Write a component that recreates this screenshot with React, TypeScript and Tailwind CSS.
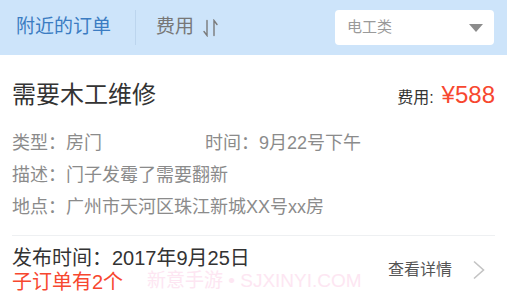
import React from 'react'

const font = "font-['Liberation_Sans','Noto_Sans_CJK_SC',sans-serif]"

function SortIcon() {
  return (
    <svg width="15" height="18" viewBox="0 0 15 18" fill="none" stroke="#7a7a7a" strokeWidth="1.4" strokeLinecap="round">
      <path d="M4 1.5V16.5L1 12.5" />
      <path d="M11 16.5V1.5L14 5.5" />
    </svg>
  )
}

function Chevron() {
  return (
    <svg width="14" height="20" viewBox="0 0 14 20" fill="none" stroke="#c3c3c3" strokeWidth="1.6">
      <path d="M2 1.5L11.5 10L2 18.5" />
    </svg>
  )
}

export default function App() {
  return (
    <div className={`relative h-[301px] w-[507px] overflow-hidden bg-white ${font}`}>
      {/* top filter bar */}
      <div className="flex h-[55px] items-center bg-[#cde4fa]">
        <div className="pl-4 text-[19px] text-[#3b7cc2]">附近的订单</div>
        <div className="ml-[24px] h-[35px] w-px bg-[#bcd5ee]" />
        <div className="ml-[20px] flex items-center gap-[9px] text-[19px] text-[#777]">
          <span>费用</span>
          <SortIcon />
        </div>
        <div className="ml-auto mr-[13px] flex h-[35px] w-[159px] items-center justify-between rounded-[4px] bg-white pl-3 pr-[11px]">
          <span className="text-[15px] text-[#9a9a9a]">电工类</span>
          <span className="h-0 w-0 border-x-[7.5px] border-t-[8px] border-x-transparent border-t-[#8c8c8c]" />
        </div>
      </div>

      {/* order card */}
      <div className="px-3">
        <div className="flex items-center justify-between pt-[22px]">
          <div className="text-[24px] leading-[36px] text-[#333]">需要木工维修</div>
          <div className="flex items-baseline">
            <span className="text-[16px] text-[#333]">费用:</span>
            <span className="ml-[8px] text-[24px] leading-[36px] text-[#f7472f]">¥588</span>
          </div>
        </div>

        <div className="mt-[14px] text-[18px] leading-[32px] text-[#8b8b8b]">
          <div className="flex">
            <div className="w-[193px]">类型：房门</div>
            <div>时间：9月22号下午</div>
          </div>
          <div>描述：门子发霉了需要翻新</div>
          <div>地点：广州市天河区珠江新城XX号xx房</div>
        </div>

        <div className="mt-[12px] h-px bg-[#eef0f2]" />

        <div className="mt-[10px] flex items-center justify-between">
          <div className="text-[20px] leading-[24px]">
            <div className="text-[#333]">发布时间：2017年9月25日</div>
            <div className="text-[#f7472f]">子订单有2个</div>
          </div>
          <div className="flex items-center gap-[20px] pr-[9px]">
            <span className="text-[16px] text-[#555]">查看详情</span>
            <Chevron />
          </div>
        </div>
      </div>

      {/* watermark */}
      <div className="pointer-events-none absolute left-[147px] top-[267px] text-[19px] text-[#fde6f2]">
        新意手游 • SJXINYI.COM
      </div>
    </div>
  )
}
